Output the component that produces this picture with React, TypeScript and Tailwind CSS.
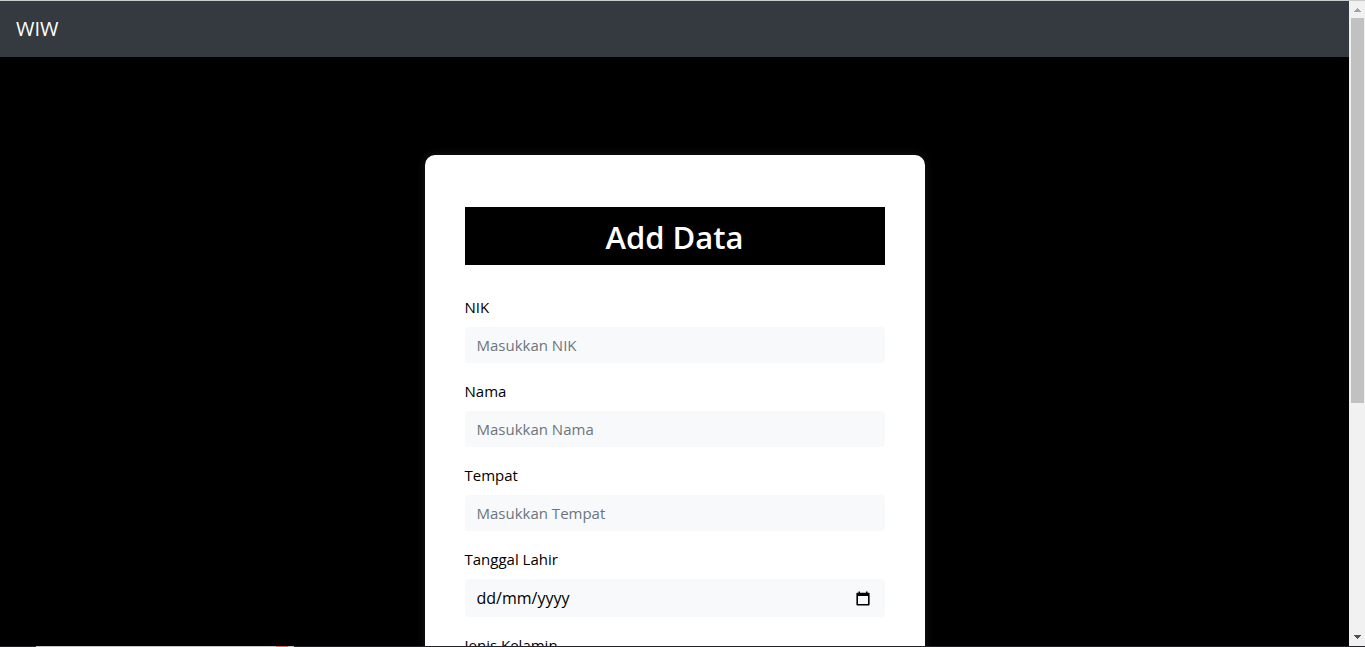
import type { ReactNode } from 'react';

const controlClass =
  'block w-full rounded border-0 bg-[#f8f9fb] px-3 text-[15px] text-black outline-none placeholder:text-[#6c757d]';

function Field({ id, label, children }: { id: string; label: string; children: ReactNode }) {
  return (
    <div className="mb-4">
      <label htmlFor={id} className="mb-2 block text-[15px] leading-6 text-black">
        {label}
      </label>
      {children}
    </div>
  );
}

function CalendarIcon() {
  return (
    <svg width="14" height="15" viewBox="0 0 14 15" aria-hidden="true">
      <path
        d="M2.5 0.4H4v1.4h6V0.4h1.5v1.4H13q.6 0 .6.6v11.2q0 .9-.9.9H1.3q-.9 0-.9-.9V2.4q0-.6.6-.6h1.5zM2 5v8h10V5z"
        fill="#000"
        fillRule="evenodd"
      />
    </svg>
  );
}

function Scrollbar() {
  return (
    <div aria-hidden="true" className="flex w-4 shrink-0 flex-col bg-[#f1f1f1]">
      <div className="flex h-[17px] items-center justify-center">
        <svg width="7" height="4" viewBox="0 0 7 4" shapeRendering="crispEdges">
          <path d="M3 0h1v1h1v1h1v1h1v1H0V3h1V2h1V1h1z" fill="#a3a3a3" />
        </svg>
      </div>
      <div className="flex-1 pl-0.5 pr-px">
        <div className="h-[63%] bg-[#c1c1c1]" />
      </div>
      <div className="flex h-[17px] items-start justify-center pt-1.5">
        <svg width="7" height="4" viewBox="0 0 7 4" shapeRendering="crispEdges">
          <path d="M0 0h7v1H6v1H5v1H4v1H3V3H2V2H1V1H0z" fill="#505050" />
        </svg>
      </div>
    </div>
  );
}

export default function App() {
  return (
    <div className="flex h-screen flex-col overflow-hidden bg-black font-['Open_Sans',sans-serif]">
      <div className="h-px shrink-0 bg-[#c8cdca]" />
      <div className="flex min-h-0 flex-1">
        <div className="min-w-0 flex-1 overflow-hidden">
          <nav className="flex h-14 items-center bg-[#343a40] px-4">
            <a href="#" className="text-xl leading-8 text-white">
              WIW
            </a>
          </nav>
          <main className="flex justify-center pt-[98px] pb-24">
            <form className="w-full max-w-[500px] rounded-[10px] bg-white px-10 pt-[52px] pb-10 shadow-[0_0_10px_rgba(255,255,255,0.1)]">
              <h1 className="mb-[30px] bg-black pt-0.5 text-center text-[31px] leading-14 font-semibold text-white">
                Add Data
              </h1>
              <Field id="nik" label="NIK">
                <input id="nik" type="text" placeholder="Masukkan NIK" className={`${controlClass} h-9`} />
              </Field>
              <Field id="nama" label="Nama">
                <input id="nama" type="text" placeholder="Masukkan Nama" className={`${controlClass} h-9`} />
              </Field>
              <Field id="tempat" label="Tempat">
                <input id="tempat" type="text" placeholder="Masukkan Tempat" className={`${controlClass} h-9`} />
              </Field>
              <Field id="tanggal" label="Tanggal Lahir">
                <div className="flex h-[38px] items-center rounded bg-[#f8f9fb] pr-[15px] pl-3">
                  <input
                    id="tanggal"
                    type="text"
                    inputMode="numeric"
                    placeholder="dd/mm/yyyy"
                    className="min-w-0 flex-1 bg-transparent text-base text-black outline-none placeholder:text-black"
                  />
                  <button type="button" aria-label="Tanggal Lahir">
                    <CalendarIcon />
                  </button>
                </div>
              </Field>
              <Field id="kelamin" label="Jenis Kelamin">
                <select id="kelamin" className={`${controlClass} h-9`}>
                  <option>Laki-laki</option>
                  <option>Perempuan</option>
                </select>
              </Field>
            </form>
          </main>
        </div>
        <Scrollbar />
      </div>
      <div className="flex h-px shrink-0 bg-[#25232a] pl-9">
        <div className="w-60 bg-[#c4c4c4]" />
        <div className="w-3 bg-[#e2654f]" />
        <div className="w-1.5 bg-[#c4c4c4]" />
      </div>
    </div>
  );
}
